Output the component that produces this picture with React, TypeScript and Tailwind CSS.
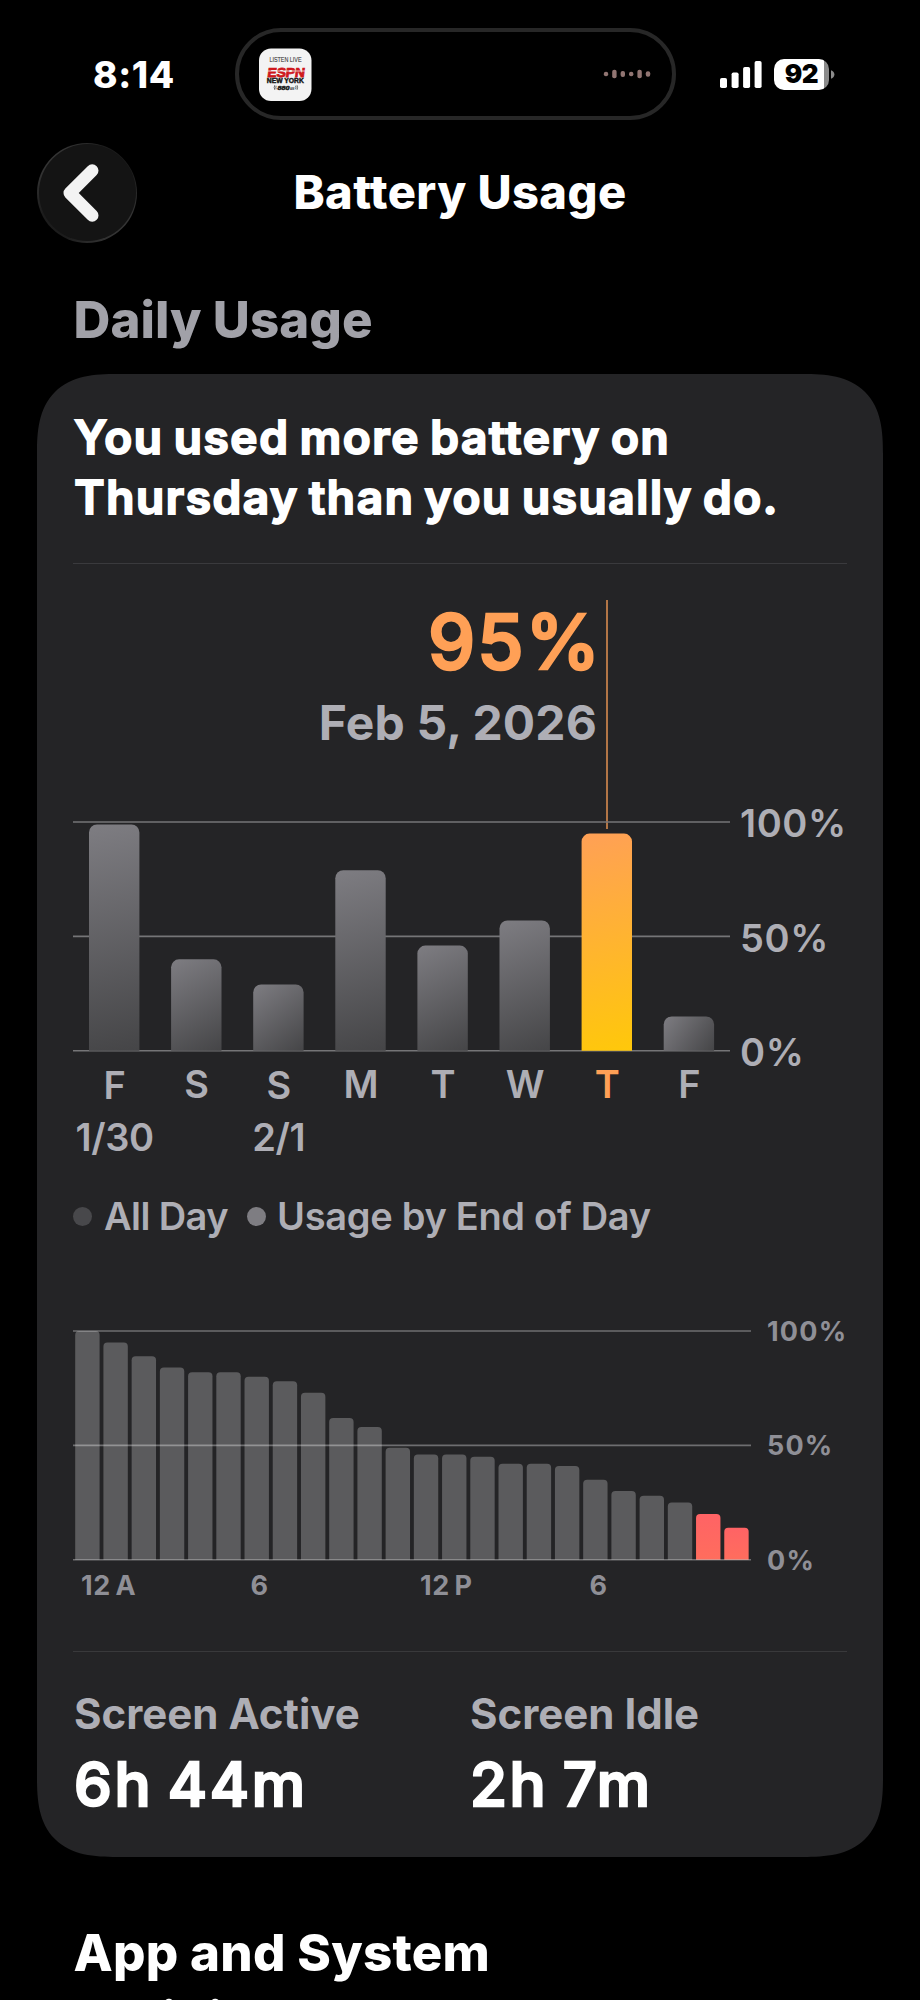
import type { ReactNode } from "react";

const WEEK = [
  { day: "F", date: "1/30", value: 99 },
  { day: "S", value: 40 },
  { day: "S", date: "2/1", value: 29 },
  { day: "M", value: 79 },
  { day: "T", value: 46 },
  { day: "W", value: 57 },
  { day: "T", value: 95, selected: true },
  { day: "F", value: 15 },
];

const HOURS = [
  100, 95, 89, 84, 82, 82, 80, 78, 73, 62, 58, 49, 46, 46, 45, 42, 42, 41, 35, 30, 28, 25, 20, 14,
];

const LEVELS = ["100%", "50%", "0%"];
const GRID_LINES = [2, 116.4, 230.8];

/** Bar with only its top corners rounded. */
function barPath(x: number, top: number, w: number, bottom: number, r: number) {
  return `M${x} ${bottom}V${top + r}a${r} ${r} 0 0 1 ${r} ${-r}h${w - 2 * r}a${r} ${r} 0 0 1 ${r} ${r}V${bottom}z`;
}

function StationArt() {
  return (
    <svg className="size-[53px] shrink-0 overflow-visible" viewBox="0 0 53 53" fontFamily="'Liberation Sans', sans-serif">
      <rect x="0" y="0.5" width="52.5" height="52.5" rx="12" fill="#f3f3f3" />
      <text x="10.5" y="14.4" fontSize="7.8" fill="#3c3c3c" stroke="#3c3c3c" strokeWidth="0.15" textLength="32" lengthAdjust="spacingAndGlyphs">
        LISTEN LIVE
      </text>
      <text
        x="11.6"
        y="29.4"
        fontSize="13"
        fontWeight="700"
        fill="#cf171c"
        stroke="#cf171c"
        strokeWidth="0.8"
        textLength="37.5"
        lengthAdjust="spacingAndGlyphs"
        transform="skewX(-7)"
      >
        ESPN
      </text>
      <path d="M8.5 23H46" stroke="#f3f3f3" strokeWidth="0.8" />
      <text x="7.8" y="35.2" fontSize="6.4" fontWeight="700" fill="#151515" stroke="#151515" strokeWidth="0.4" textLength="37" lengthAdjust="spacingAndGlyphs">
        NEW YORK
      </text>
      <text x="18.6" y="41.8" fontSize="5.4" fontWeight="700" fontStyle="italic" fill="#151515" stroke="#151515" strokeWidth="0.4" textLength="12" lengthAdjust="spacingAndGlyphs">
        880
      </text>
      <text x="31" y="41.8" fontSize="2.8" fontWeight="700" fill="#333" textLength="4.4" lengthAdjust="spacingAndGlyphs">
        AM
      </text>
      <path
        d="M15.8 37.2q-1.2 2.2 0 4.6M17.2 37.8q-.8 1.6 0 3.4M36.6 37.8q.8 1.6 0 3.4M38 37.2q1.2 2.2 0 4.6"
        fill="none"
        stroke="#444"
        strokeWidth="0.8"
      />
    </svg>
  );
}

function Waveform() {
  const heights = [4.4, 8.6, 6, 4.4, 8.6, 5.4];
  return (
    <svg className="h-[12px] w-[48px]" viewBox="0 0 48 12">
      {heights.map((h, i) => (
        <rect key={i} x={0.8 + i * 8.4} y={6 - h / 2} width="4.4" height={h} rx="2" fill="#917572" />
      ))}
    </svg>
  );
}

function StatusBar() {
  return (
    <div className="flex h-[142px] items-start pt-[28px]">
      <div className="flex h-[92px] w-[235px] shrink-0 items-center pt-px pl-[93px] text-[37px] leading-[46px] font-extrabold tracking-[0.6px]">
        8:14
      </div>
      <div className="flex h-[92px] w-[441px] shrink-0 items-center justify-between rounded-full border-4 border-[#272727] pr-[21px] pl-[20px]">
        <StationArt />
        <Waveform />
      </div>
      <div className="flex h-[92px] items-center pl-[44px]">
        <svg className="h-[28px] w-[42px]" viewBox="0 0 42 28" fill="#fff">
          <rect x="0" y="18" width="7" height="10" rx="1.8" />
          <rect x="11.6" y="12.4" width="7" height="15.6" rx="1.8" />
          <rect x="23.1" y="7" width="7" height="21" rx="1.8" />
          <rect x="34.6" y="1" width="7" height="27" rx="1.8" />
        </svg>
        <div className="ml-[12px] flex h-[31px] w-[55px] items-center justify-center rounded-[10px] bg-[linear-gradient(90deg,#fff_50px,#8b8b8b_50px)] text-[26px] leading-[30px] font-black tracking-[-0.4px] text-black">
          92
        </div>
        <svg className="ml-[2px] h-[9px] w-[4px]" viewBox="0 0 4 9">
          <path d="M0 0.2Q3.4 1.6 3.4 4.5T0 8.8z" fill="#8b8b8b" />
        </svg>
      </div>
    </div>
  );
}

function NavBar() {
  return (
    <div className="grid h-[101px] grid-cols-[100px_1fr_100px] items-center px-[37px]">
      <button className="flex size-[100px] items-center justify-center rounded-full bg-[linear-gradient(135deg,#454545,#1c1c1c_38%,#1c1c1c_62%,#454545)] p-[1.5px]">
        <span className="flex size-full items-center justify-center rounded-full bg-[#141414]">
          <svg className="mr-[12px] h-[58px] w-[36px]" viewBox="0 0 36 58">
            <path d="M29.2 6.6L6.8 29L29.2 51.4" fill="none" stroke="#f3f3f3" strokeWidth="12.6" strokeLinecap="round" strokeLinejoin="round" />
          </svg>
        </span>
      </button>
      <h1 className="pb-[2px] text-center text-[47px] leading-[60px] font-extrabold tracking-[0.43px]">Battery Usage</h1>
    </div>
  );
}

function PlotRow({ plot, labels }: { plot: ReactNode; labels: ReactNode }) {
  return (
    <div className="flex items-start">
      {plot}
      {labels}
    </div>
  );
}

function WeekChart() {
  const base = 230.8;
  return (
    <>
      <div className="mt-[36px] mb-[-9px] h-[229px] w-[535px] border-r-2 border-[#b27546] pt-[6px] text-right">
        <div className="pr-[4px] text-[75px] leading-[72px] font-medium tracking-[2px] text-[#ffa056] [-webkit-text-stroke:2.6px_currentColor] [stroke-linejoin:round]">
          95%
        </div>
        <div className="mt-[16px] pr-[9px] text-[48px] leading-[58px] font-[660] tracking-[0.15px] text-[#aeaeb5]">Feb 5, 2026</div>
      </div>
      <PlotRow
        plot={
          <svg className="h-[232px] w-[657px] shrink-0" viewBox="0 0 657 232">
            <defs>
              {WEEK.map((d, i) => {
                const x = 16 + i * 82.1;
                return (
                  <linearGradient
                    key={i}
                    id={`bar-${i}`}
                    gradientUnits="userSpaceOnUse"
                    x1={x}
                    y1={base - d.value * 2.287}
                    x2={x + 50.4}
                    y2={base}
                  >
                    <stop offset="0" stopColor={d.selected ? "#ffa056" : "#7e7d82"} />
                    <stop offset="1" stopColor={d.selected ? "#ffc80a" : "#454547"} />
                  </linearGradient>
                );
              })}
            </defs>
            {GRID_LINES.map((y) => (
              <path key={y} d={`M0 ${y}H657`} stroke="#757577" strokeWidth="1.6" />
            ))}
            {WEEK.map((d, i) => (
              <path key={i} d={barPath(16 + i * 82.1, base - d.value * 2.287, 50.4, base, 8)} fill={`url(#bar-${i})`} />
            ))}
          </svg>
        }
        labels={
          <div className="-mt-[20px] -mb-[60px] flex flex-col gap-[68.5px] pl-[10px] text-[38px] leading-[46px] font-[570] tracking-[0.6px] text-[#aeaeb5]">
            {LEVELS.map((l) => (
              <span key={l}>{l}</span>
            ))}
          </div>
        }
      />
      <div className="mt-[6px] grid h-[106px] w-[657px] grid-cols-8 text-center text-[38px] leading-[52px] font-[570] text-[#aeaeb5]">
        {WEEK.map((d, i) => (
          <div key={i} className={d.date ? "pt-px pl-px" : d.selected ? "pl-px text-[#ffa056]" : "pl-px"}>
            <div>{d.day}</div>
            {d.date && <div className="tracking-[-0.4px] whitespace-nowrap">{d.date}</div>}
          </div>
        ))}
      </div>
      <div className="mt-[29px] flex items-center text-[38px] leading-[46px] font-[570] whitespace-nowrap text-[#aeaeb5]">
        <span className="size-[19px] rounded-full bg-[#48484b]" />
        <span className="ml-[12px] w-[124px] tracking-[-0.6px]">All Day</span>
        <span className="ml-[19px] size-[19px] rounded-full bg-[#7e7d82]" />
        <span className="ml-[11px] tracking-[-0.3px]">Usage by End of Day</span>
      </div>
    </>
  );
}

function HourChart() {
  const base = 230.7;
  return (
    <>
      <div className="mt-[90px]">
        <PlotRow
          plot={
            <svg className="h-[232px] w-[678px] shrink-0" viewBox="0 0 678 232">
              <defs>
                <linearGradient id="low" x1="0" y1="0" x2="0" y2="1">
                  <stop offset="0" stopColor="#ff6365" />
                  <stop offset="1" stopColor="#ff6d5d" />
                </linearGradient>
              </defs>
              {HOURS.map((v, i) => (
                <path key={i} d={barPath(2.2 + i * 28.22, base - v * 2.287, 24.4, base, 4)} fill={v <= 20 ? "url(#low)" : "#5b5b5d"} />
              ))}
              {GRID_LINES.map((y) => (
                <path key={y} d={`M0 ${y}H678`} stroke="#fff" strokeOpacity="0.34" strokeWidth="1.6" />
              ))}
            </svg>
          }
          labels={
            <div className="-mt-[13px] -mb-[41px] flex flex-col gap-[82.3px] pl-[16px] text-[27px] leading-[32px] font-[660] tracking-[1.2px] text-[#8f8f96]">
              {LEVELS.map((l) => (
                <span key={l}>{l}</span>
              ))}
            </div>
          }
        />
      </div>
      <div className="mt-[9px] grid w-[678px] grid-cols-4 text-[27px] leading-[32px] font-[660] tracking-[0.5px] text-[#8f8f96] [word-spacing:-2px]">
        {["12 A", "6", "12 P", "6"].map((l, i) => (
          <span key={i} className="pl-[8px]">
            {l}
          </span>
        ))}
      </div>
    </>
  );
}

function Stat({ label, value }: { label: string; value: string }) {
  return (
    <div>
      <div className="text-[42px] leading-[52px] font-[660] tracking-[0px] text-[#aeaeb5]">{label}</div>
      <div className="mt-[10px] text-[60px] leading-[68px] font-medium tracking-[2.6px] [-webkit-text-stroke:2.4px_currentColor] [stroke-linejoin:round] [word-spacing:-4px]">
        {value}
      </div>
    </div>
  );
}

export default function App() {
  return (
    <div className="h-[2000px] w-[920px] overflow-hidden bg-black font-['Inter',sans-serif] text-white">
      <StatusBar />
      <NavBar />
      <h2 className="mt-[45px] pl-[73.5px] text-[51px] leading-[64px] font-[780] tracking-[0.05px] text-[#a1a1a8]">Daily Usage</h2>
      <section className="mx-[37px] mt-[22px] h-[1483px] rounded-[80px] bg-[#242426] px-[36px] pt-[34px] [corner-shape:superellipse(1.45)]">
        <p className="pl-[1.3px] text-[46px] leading-[59.6px] font-semibold tracking-[1.6px] [-webkit-text-stroke:2px_currentColor] [stroke-linejoin:round] [word-spacing:-3px]">
          You used more battery on
          <br />
          Thursday than you usually do.
        </p>
        <hr className="mt-[36px] border-t border-[#3a3a3d]" />
        <WeekChart />
        <HourChart />
        <hr className="mt-[49px] border-t border-[#39393b]" />
        <div className="mt-[36px] grid grid-cols-[396px_1fr] pl-px">
          <Stat label="Screen Active" value="6h 44m" />
          <Stat label="Screen Idle" value="2h 7m" />
        </div>
      </section>
      <h2 className="mt-[63px] w-[500px] pl-[73.5px] text-[51px] leading-[66.5px] font-[780] tracking-[0.27px]">App and System Activity</h2>
    </div>
  );
}
